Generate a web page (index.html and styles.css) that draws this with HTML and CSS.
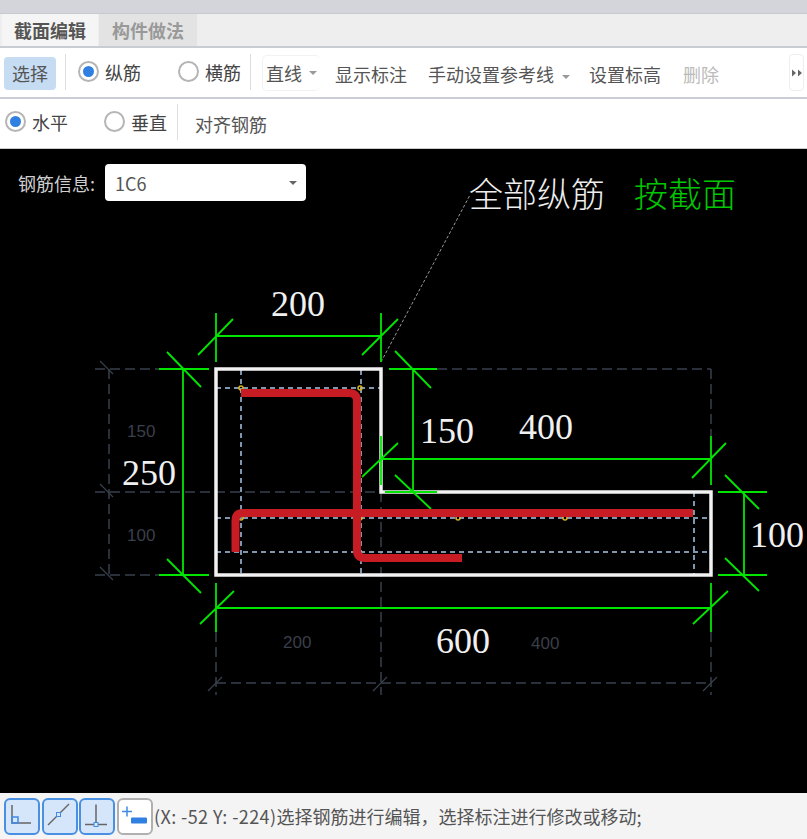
FILE: index.html
```html
<!DOCTYPE html>
<html lang="zh">
<head>
<meta charset="utf-8">
<title>截面编辑</title>
<link rel="stylesheet" href="styles.css">
</head>
<body>
<div class="app">
  <div class="titlebar"></div>
  <div class="tabs">
    <div class="tab tab-active">截面编辑</div>
    <div class="tab tab-idle">构件做法</div>
  </div>
  <div class="toolbar toolbar-main">
    <button class="tbtn tbtn-select">选择</button>
    <span class="sep sep-a"></span>
    <label class="radio radio-a"><span class="dot on"></span><span>纵筋</span></label>
    <label class="radio radio-b"><span class="dot"></span><span>横筋</span></label>
    <span class="sep sep-b"></span>
    <div class="linebox"><span>直线</span><i class="caret"></i></div>
    <span class="tool tool-show">显示标注</span>
    <span class="tool tool-ref">手动设置参考线<i class="caret caret-ref"></i></span>
    <span class="tool tool-level">设置标高</span>
    <span class="tool tool-del">删除</span>
    <div class="more">
      <svg width="10" height="8" viewBox="0 0 10 8"><path d="M0 0.5L4 4L0 7.5ZM6 0.5L10 4L6 7.5Z" fill="#666"/></svg>
    </div>
  </div>
  <div class="toolbar toolbar-sub">
    <label class="radio radio-c"><span class="dot on"></span><span>水平</span></label>
    <label class="radio radio-d"><span class="dot"></span><span>垂直</span></label>
    <span class="sep sep-c"></span>
    <span class="tool tool-align">对齐钢筋</span>
  </div>
  <div class="canvas">
    <svg class="drawing" width="807" height="644" viewBox="0 149 807 644">
      <g class="grey" fill="none">
        <path d="M95 369H159M95 492H381M95 575H209M437 369H711M109 369V575M216 632V695M381 492V695M711 369V436M711 632V695M216 683H711"/>
      </g>
      <g class="greyTick" fill="none">
        <path d="M100 361L113 374M100 484L113 497M100 567L113 580M208 691L222 677M373 691L387 677M703 691L717 677"/>
      </g>
      <g class="guide" fill="none">
        <path d="M241 370V575M361 370V575M694 492V575M216 388H381M216 518H711M216 552H711"/>
      </g>
      <path class="leader" d="M381 362L470 195" fill="none"/>
      <g class="pin">
        <circle cx="241" cy="388" r="2"/><circle cx="360" cy="388" r="2"/>
        <circle cx="241" cy="518" r="2"/><circle cx="360" cy="518" r="2"/>
        <circle cx="458" cy="518" r="2"/><circle cx="565" cy="518" r="2"/>
      </g>
      <path class="section" d="M216 369H381V492H711V575H216Z" fill="none"/>
      <g class="dim" fill="none">
        <path d="M216 336H381M216 313V362M381 313V362M198 355L233 319M362 355L398 319"/>
        <path d="M183 369V575M159 369H209M159 575H209M167 352L201 387M167 559L201 593"/>
        <path d="M413 369V492M389 369H437M385 492H437M395 351L431 388M395 475L431 509"/>
        <path d="M381 459H711M381 436V485M711 436V485M362 477L398 443M692 478L726 443"/>
        <path d="M744 492V575M718 492H767M718 575H767M725 475L759 509M725 558L759 591"/>
        <path d="M216 608H711M216 583V632M711 583V632M200 624L234 591M693 624L728 591"/>
      </g>
      <g class="rebar" fill="none">
        <path d="M241 393H349Q357 393 357 401V550Q357 558 365 558H462"/>
        <path d="M235.500 552V521Q235.500 513 243 513H693"/>
      </g>
      <text class="label-cn white" x="469" y="207">全部纵筋</text>
      <text class="label-cn green" x="634" y="207">按截面</text>
      <text class="num" x="271" y="316">200</text>
      <text class="num" x="122" y="485">250</text>
      <text class="num" x="420" y="443">150</text>
      <text class="num" x="519" y="439">400</text>
      <text class="num" x="436" y="653">600</text>
      <text class="num" x="750" y="547">100</text>
      <text class="faint" x="127" y="437">150</text>
      <text class="faint" x="127" y="541">100</text>
      <text class="faint" x="283" y="648">200</text>
      <text class="faint" x="531" y="649">400</text>
    </svg>
    <div class="rebar-info">
      <span class="rebar-label">钢筋信息:</span>
      <div class="combo"><span>1C6</span><i class="caret caret-combo"></i></div>
    </div>
  </div>
  <div class="statusbar">
    <button class="sbtn on">
      <svg width="32" height="32" viewBox="0 0 32 32" fill="none"><path d="M6 5V23H25" stroke="#666" stroke-width="1.500"/><rect x="6" y="17" width="6" height="6" stroke="#3f8be6" stroke-width="1.500"/></svg>
    </button>
    <button class="sbtn on">
      <svg width="32" height="32" viewBox="0 0 32 32" fill="none"><path d="M4 25L25 4" stroke="#666" stroke-width="1.500"/><rect x="12.500" y="12.500" width="4" height="4" fill="#d6e6fa" stroke="#3f8be6"/></svg>
    </button>
    <button class="sbtn on">
      <svg width="32" height="32" viewBox="0 0 32 32" fill="none"><path d="M15 4.500V24.500M4 24.500H26" stroke="#666" stroke-width="1.500"/><rect x="13" y="22.500" width="4" height="4" fill="#d6e6fa" stroke="#3f8be6"/></svg>
    </button>
    <button class="sbtn off">
      <svg width="32" height="32" viewBox="0 0 32 32" fill="none"><path d="M3 11.500H13M8 6.500V16.500" stroke="#3f8be6" stroke-width="1.500"/><rect x="12" y="17.500" width="16" height="6" rx="1" fill="#2f80e0"/></svg>
    </button>
    <span class="status-text"><span class="coords">(X: -52 Y: -224)</span>选择钢筋进行编辑，选择标注进行修改或移动;</span>
  </div>
</div>
</body>
</html>
```

FILE: styles.css
```css
* { box-sizing: border-box; }
html, body { margin: 0; padding: 0; background: #fff; }
body { font-family: "Noto Sans CJK SC", "Noto Sans", sans-serif; color: #555; overflow: hidden; }
.app { width: 807px; height: 839px; display: flex; flex-direction: column; }

.titlebar { height: 14px; background: #d3d5da; border-bottom: 1px solid #c6c9ce; flex: none; }
.tabs { height: 32px; flex: none; display: flex; background: #eeeeee; padding-left: 2px; gap: 1px; }
.tab { width: 96px; font-size: 18px; line-height: 32px; text-align: center; font-weight: 700; }
.tab-active { background: #f5f5f5; color: #555; }
.tab-idle { width: 98px; background: #e3e3e3; color: #999; }

.toolbar { flex: none; display: flex; align-items: center; background: #fff; border-top: 2px solid #c9ccd2; font-size: 18px; }
.toolbar-main { height: 51px; padding-bottom: 2px; }
.toolbar-sub { height: 52px; border-bottom: 1px solid #ccc; padding-bottom: 4px; }

.tbtn { font: inherit; color: #555; border: 0; border-radius: 4px; padding: 0; }
.tbtn-select { width: 52px; height: 33px; margin-left: 4px; margin-top: 3px; background: #c5dcf3; }

.sep { width: 1px; height: 36px; background: #dddddd; flex: none; }
.sep-a { margin-left: 9px; }
.sep-b { margin-left: 9px; }
.sep-c { margin-left: 10px; }

.radio { display: flex; align-items: center; gap: 6px; color: #444; }
.dot { width: 21px; height: 21px; border: 2px solid #b5b5b5; border-radius: 50%; background: #fff; display: flex; align-items: center; justify-content: center; flex: none; }
.dot.on::after { content: ""; width: 11px; height: 11px; border-radius: 50%; background: #2f80e0; }
.radio-a { margin-left: 12px; }
.radio-b { margin-left: 37px; }
.radio-c { margin-left: 5px; }
.radio-d { margin-left: 36px; }

.linebox { display: flex; align-items: center; width: 58px; height: 36px; margin-left: 11px; margin-top: 3px; padding-left: 3px; border: 1px solid #f2f2f2; border-right: 0; border-radius: 5px; }
.caret { display: inline-block; width: 0; height: 0; border-left: 4px solid transparent; border-right: 4px solid transparent; border-top: 4px solid #999; margin-left: 7px; }
.tool { margin-top: 5px; white-space: nowrap; }
.tool-show { margin-left: 15px; }
.tool-ref { margin-left: 21px; }
.caret-ref { margin-left: 8px; vertical-align: middle; }
.tool-level { margin-left: 19px; }
.tool-del { margin-left: 22px; color: #bbb; }
.tool-align { margin-left: 17px; margin-top: 4px; }
.more { margin-left: auto; margin-right: 3px; margin-top: 2px; width: 15px; height: 37px; border: 1px solid #eeeeee; border-radius: 4px; display: flex; align-items: center; justify-content: center; }

.canvas { position: relative; flex: none; height: 644px; background: #000; overflow: hidden; }
.drawing { display: block; }
.grey { stroke: #39404c; stroke-width: 1.500; stroke-dasharray: 10 5; }
.greyTick { stroke: #39404c; stroke-width: 1.200; }
.guide { stroke: #a8c8e8; stroke-width: 1.500; stroke-dasharray: 5 4; }
.leader { stroke: #999; stroke-width: 1; stroke-dasharray: 3 2; }
.pin { fill: none; stroke: #d8b422; stroke-width: 1.500; }
.section { stroke: #f2f2f2; stroke-width: 3.500; }
.dim { stroke: #00e600; stroke-width: 1.800; }
.rebar { stroke: #c81c24; stroke-width: 8; }
.label-cn { font-size: 34px; font-family: "Noto Sans CJK SC", sans-serif; font-weight: 300; }
.white { fill: #eeeeee; }
.green { fill: #00c800; }
.num { font-family: "Liberation Serif", serif; font-size: 36px; fill: #f0f0f0; }
.faint { font-family: "Liberation Sans", sans-serif; font-size: 17px; fill: #3a3f4a; }

.rebar-info { position: absolute; left: 18px; top: 15px; display: flex; align-items: center; gap: 11px; }
.rebar-label { font-size: 18px; color: #cfcfcf; width: 76px; white-space: nowrap; }
.combo { width: 201px; height: 37px; background: #fff; border-radius: 4px; display: flex; align-items: center; justify-content: space-between; padding: 0 9px 0 10px; font-size: 18px; color: #555; }
.caret-combo { border-top-color: #666; margin: 0; }

.statusbar { flex: 1; display: flex; align-items: center; background: #f4f4f4; padding-left: 4px; gap: 1.500px; font-size: 18px; }
.sbtn { width: 36px; height: 37px; padding: 0; border-radius: 6px; display: flex; align-items: center; justify-content: center; flex: none; }
.sbtn.on { background: #d6e6fa; border: 2px solid #4a90e2; }
.sbtn.off { background: #fff; border: 2px solid #b0b0b0; }
.status-text { color: #555; white-space: nowrap; }
.coords { letter-spacing: 0.400px; }
```
